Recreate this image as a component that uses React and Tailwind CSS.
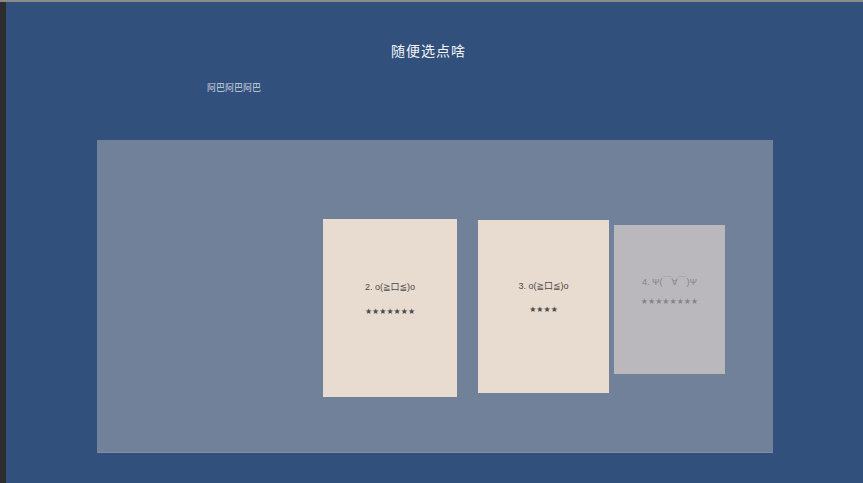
import React from 'react';

const cards = [
  { id: 2, face: 'o(≧口≦)o', stars: '★★★★★★★', w: 'w-[134px]', h: 'h-[178px]', mt: 'mt-[79px]', ml: 'ml-[226px]', bg: 'bg-[#e8dbcf]', text: 'text-[#4a4a4a]', pt: 'pt-[62px]', gap: 'mt-[14px]' },
  { id: 3, face: 'o(≧口≦)o', stars: '★★★★', w: 'w-[131px]', h: 'h-[173px]', mt: 'mt-[80px]', ml: 'ml-[21px]', bg: 'bg-[#e8dbcf]', text: 'text-[#4a4a4a]', pt: 'pt-[60px]', gap: 'mt-[13px]' },
  { id: 4, face: 'Ψ(￣∀￣)Ψ', stars: '★★★★★★★★', w: 'w-[111px]', h: 'h-[149px]', mt: 'mt-[85px]', ml: 'ml-[5px]', bg: 'bg-[#bab8bc]', text: 'text-[#85858b]', pt: 'pt-[51px]', gap: 'mt-[9px]' },
];

const Card = ({ c }) => (
  <div className={`${c.w} ${c.h} ${c.mt} ${c.ml} ${c.bg} ${c.text} ${c.pt} shrink-0 flex flex-col items-center`}>
    <div className="text-[9px] leading-[12px]">{c.id}. {c.face}</div>
    <div className={`text-[8px] leading-[10px] ${c.gap}`}>{c.stars}</div>
  </div>
);

export default function App() {
  return (
    <div className="flex flex-col h-[483px] w-full overflow-hidden" style={{ fontFamily: '"Liberation Sans", "DejaVu Sans", "Noto Sans CJK SC", sans-serif' }}>
      <div className="h-[2px] bg-[#8a8a8a] shrink-0" />
      <div className="flex flex-1">
        <div className="w-[6px] h-full bg-[#2d2d2d] shrink-0" />
        <div className="flex-1 bg-[#31507b] flex flex-col">
          <h1 className="text-center text-[14px] leading-[20px] text-[#f2f4f8] mt-[39px] pr-[12px] tracking-[1px]">随便选点啥</h1>
          <p className="text-[9px] leading-[12px] text-[#cfd6e2] mt-[21px] ml-[201px]">阿巴阿巴阿巴</p>
          <div className="mt-[46px] ml-[91px] mr-[90px] h-[313px] bg-[#71819a] border-b border-[#7f8ea5] flex items-start">
            {cards.map(c => <Card key={c.id} c={c} />)}
          </div>
        </div>
      </div>
    </div>
  );
}
